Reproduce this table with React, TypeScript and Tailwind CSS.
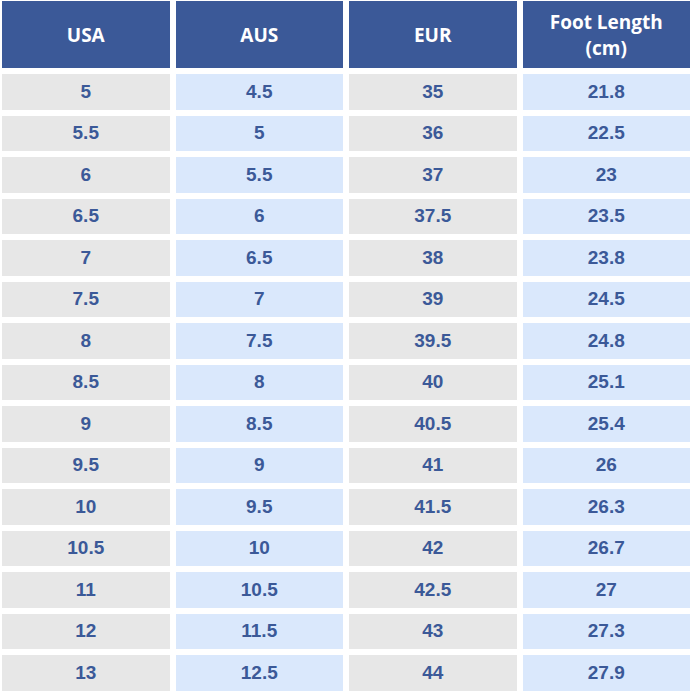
import React from "react";

const rows: [string, string, string, string][] = [
  ["5", "4.5", "35", "21.8"],
  ["5.5", "5", "36", "22.5"],
  ["6", "5.5", "37", "23"],
  ["6.5", "6", "37.5", "23.5"],
  ["7", "6.5", "38", "23.8"],
  ["7.5", "7", "39", "24.5"],
  ["8", "7.5", "39.5", "24.8"],
  ["8.5", "8", "40", "25.1"],
  ["9", "8.5", "40.5", "25.4"],
  ["9.5", "9", "41", "26"],
  ["10", "9.5", "41.5", "26.3"],
  ["10.5", "10", "42", "26.7"],
  ["11", "10.5", "42.5", "27"],
  ["12", "11.5", "43", "27.3"],
  ["13", "12.5", "44", "27.9"],
];

const headers = ["USA", "AUS", "EUR", "Foot Length (cm)"];

export default function App() {
  return (
    <div className="w-[692px] h-[692px] bg-white pt-[1px] px-[2px]">
      <div className="grid grid-cols-4 gap-x-[6px] gap-y-[6px]">
        {headers.map((h) => (
          <div
            key={h}
            className="h-[67px] bg-[#3b5998] flex items-center justify-center text-white text-center font-bold text-[19px] leading-[26px] px-5"
            style={{ fontFamily: '"Open Sans", "Noto Sans", sans-serif' }}
          >
            {h}
          </div>
        ))}
      </div>
      <div className="grid grid-cols-4 gap-x-[6px] gap-y-[6px] mt-[6px]">
        {rows.map((r, i) =>
          r.map((c, j) => (
            <div
              key={`${i}-${j}`}
              className={`h-[35.5px] flex items-center justify-center font-bold text-[19px] text-[#3b5998] ${
                j % 2 === 0 ? "bg-[#e7e7e7]" : "bg-[#dae8fc]"
              }`}
              style={{ fontFamily: '"Liberation Sans", Arial, sans-serif' }}
            >
              {c}
            </div>
          ))
        )}
      </div>
    </div>
  );
}
